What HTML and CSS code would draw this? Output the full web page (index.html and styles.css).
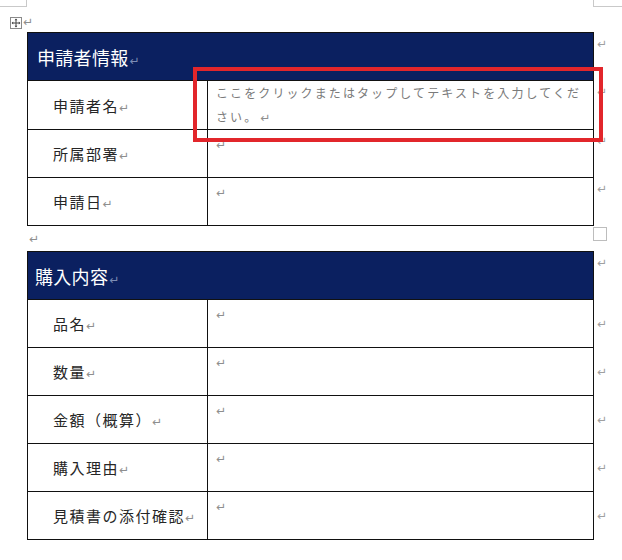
FILE: index.html
```html
<!DOCTYPE html>
<html lang="ja">
<head>
<meta charset="utf-8">
<title>申請フォーム</title>
<link rel="stylesheet" href="styles.css">
</head>
<body>
<div class="page">
  <div class="corners">
    <span class="corner corner-l"></span>
    <span class="corner corner-r"></span>
  </div>
  <div class="doc">
    <div class="handle-line">
      <svg class="handle" width="12" height="12" viewBox="0 0 12 12">
        <rect x="0.5" y="0.5" width="11" height="11" fill="#fff" stroke="#8a8a8a"/>
        <path d="M6 2.2V9.8M2.2 6H9.8" stroke="#444" stroke-width="1" fill="none"/>
        <path d="M6 1.6L4.6 3.2H7.4Z M6 10.4L4.6 8.8H7.4Z M1.6 6L3.2 4.6V7.4Z M10.4 6L8.8 4.6V7.4Z" fill="#444"/>
      </svg>
      <span class="pm">↵</span>
    </div>

    <div class="table-wrap">
      <table class="form form-a">
        <colgroup><col class="c-label"><col class="c-value"><col class="c-eol"></colgroup>
        <tr class="head">
          <th colspan="2">申請者情報<span class="pm pm-head">↵</span></th>
          <td class="eol">↵</td>
        </tr>
        <tr>
          <td class="label">申請者名<span class="pm">↵</span></td>
          <td class="value placeholder">ここをクリックまたはタップしてテキストを入力してください。<span class="pm">↵</span></td>
          <td class="eol">↵</td>
        </tr>
        <tr>
          <td class="label">所属部署<span class="pm">↵</span></td>
          <td class="value"><span class="pm">↵</span></td>
          <td class="eol">↵</td>
        </tr>
        <tr>
          <td class="label">申請日<span class="pm">↵</span></td>
          <td class="value"><span class="pm">↵</span></td>
          <td class="eol">↵</td>
        </tr>
      </table>
      <div class="highlight"></div>
    </div>

    <div class="para-line">
      <span class="pm">↵</span>
      <span class="resize"></span>
    </div>

    <table class="form form-b">
      <colgroup><col class="c-label"><col class="c-value"><col class="c-eol"></colgroup>
      <tr class="head">
        <th colspan="2">購入内容<span class="pm pm-head">↵</span></th>
        <td class="eol">↵</td>
      </tr>
      <tr>
        <td class="label">品名<span class="pm">↵</span></td>
        <td class="value"><span class="pm">↵</span></td>
        <td class="eol">↵</td>
      </tr>
      <tr>
        <td class="label">数量<span class="pm">↵</span></td>
        <td class="value"><span class="pm">↵</span></td>
        <td class="eol">↵</td>
      </tr>
      <tr>
        <td class="label">金額（概算）<span class="pm">↵</span></td>
        <td class="value"><span class="pm">↵</span></td>
        <td class="eol">↵</td>
      </tr>
      <tr>
        <td class="label">購入理由<span class="pm">↵</span></td>
        <td class="value"><span class="pm">↵</span></td>
        <td class="eol">↵</td>
      </tr>
      <tr>
        <td class="label">見積書の添付確認<span class="pm">↵</span></td>
        <td class="value"><span class="pm">↵</span></td>
        <td class="eol">↵</td>
      </tr>
    </table>
  </div>
</div>
</body>
</html>
```

FILE: styles.css
```css
html, body {
  margin: 0;
  padding: 0;
  background: #ffffff;
}

body {
  font-family: "Noto Sans CJK JP", "Noto Sans", sans-serif;
  color: #1a1a1a;
}

.page {
  width: 622px;
  height: 560px;
  overflow: hidden;
}

.corners {
  display: flex;
  justify-content: space-between;
  height: 7px;
}

.corner {
  display: block;
  height: 6px;
  border-bottom: 1px solid #c9c9c9;
}

.corner-l {
  width: 26px;
  border-right: 1px solid #c9c9c9;
}

.corner-r {
  width: 28px;
  border-left: 1px solid #c9c9c9;
}

.doc {
  padding-left: 10px;
}

.handle-line {
  display: flex;
  align-items: flex-start;
  height: 25px;
  padding-top: 10px;
  box-sizing: border-box;
}

.handle {
  display: block;
}

.pm {
  font-family: "DejaVu Sans", sans-serif;
  font-size: 12px;
  color: #8e8e8e;
  letter-spacing: 0;
}

.handle-line .pm {
  margin-left: 1px;
  line-height: 10px;
}

.table-wrap {
  position: relative;
  margin-left: 17px;
  width: 596px;
}

.form {
  border-collapse: collapse;
  table-layout: fixed;
  width: 596px;
}

.form-b {
  margin-left: 17px;
}

.c-label { width: 180px; }
.c-value { width: 386px; }
.c-eol { width: 30px; }

.form th,
.form td.label,
.form td.value {
  border: 1px solid #111;
}

.form tr {
  height: 48px;
}

.form th {
  background: #0b2060;
  color: #ffffff;
  font-weight: normal;
  font-size: 18px;
  text-align: left;
  vertical-align: middle;
  padding: 0 0 0 9px;
  letter-spacing: 0.3px;
}

.form-b th {
  padding-left: 7px;
}

.pm-head {
  color: #7d8db5;
  margin-left: 1px;
}

.form td.label {
  padding: 0 0 0 25px;
  vertical-align: middle;
  font-size: 15px;
  letter-spacing: 1.5px;
  color: #262626;
}

.form td.value {
  padding: 0 6px 0 8px;
  vertical-align: top;
  line-height: 24px;
}

.form td.value.placeholder {
  font-size: 12px;
  letter-spacing: 2.1px;
  color: #7a7a7a;
}

.form td.value.placeholder .pm {
  display: inline-block;
  margin-left: 2px;
  line-height: 14px;
}

.form td.eol {
  border: none;
  padding: 0 0 0 3px;
  vertical-align: top;
  line-height: 22px;
  font-family: "DejaVu Sans", sans-serif;
  font-size: 12px;
  color: #a0a0a0;
}

.form-b tr:not(.head) td.eol {
  vertical-align: middle;
}

.highlight {
  position: absolute;
  left: 166px;
  top: 35px;
  width: 410px;
  height: 75px;
  box-sizing: border-box;
  border: 4px solid #e2262b;
  pointer-events: none;
}

.para-line {
  display: flex;
  justify-content: space-between;
  align-items: flex-start;
  width: 580px;
  height: 25px;
  margin-left: 17px;
}

.para-line .pm {
  line-height: 26px;
  padding-left: 2px;
}

.resize {
  display: block;
  width: 12px;
  height: 12px;
  margin-top: 1px;
  border: 1px solid #bdbdbd;
}
```
